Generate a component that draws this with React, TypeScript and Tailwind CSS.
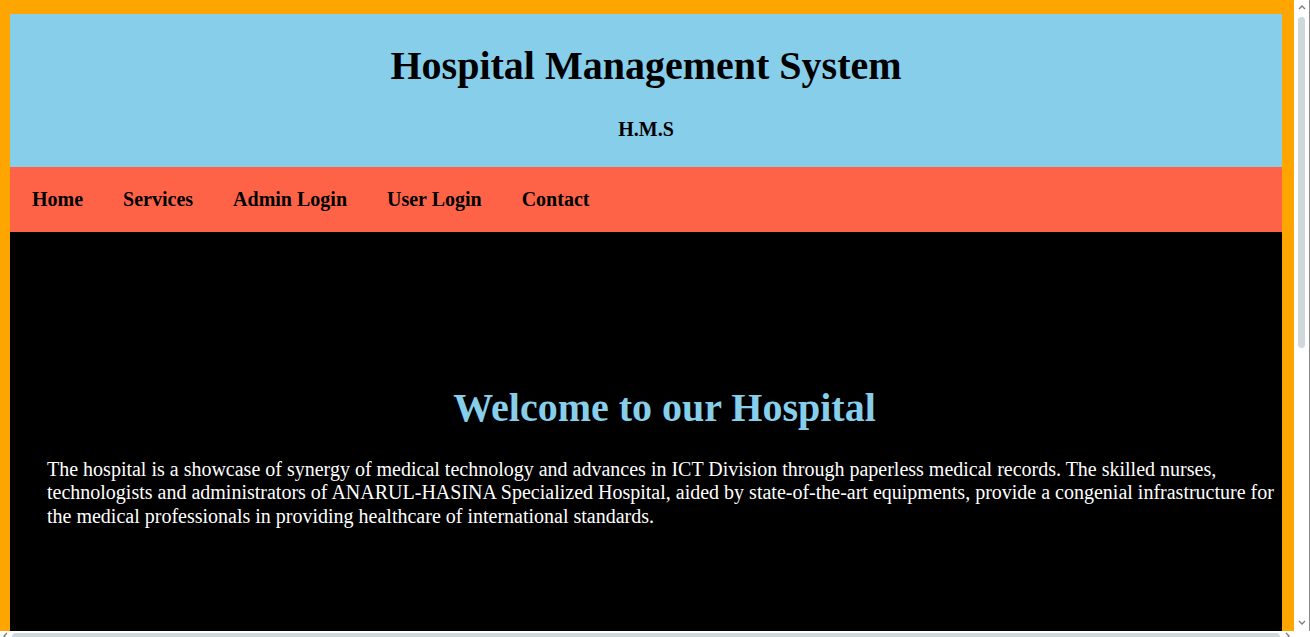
const links = ["Home", "Services", "Admin Login", "User Login", "Contact"];

function Chevron({ dir }: { dir: "up" | "down" | "left" | "right" }) {
  const pts = {
    up: "1,5 4,2 7,5",
    down: "1,2 4,5 7,2",
    left: "5,1 2,4 5,7",
    right: "2,1 5,4 2,7",
  }[dir];
  return (
    <svg width="8" height="8" viewBox="0 0 8 8" className="shrink-0">
      <polyline points={pts} fill="none" stroke="#7a7a7a" strokeWidth="1.3" />
    </svg>
  );
}

export default function App() {
  return (
    <div className="flex h-[637px] flex-col overflow-hidden bg-white font-['Liberation_Serif',serif]">
      <div className="flex h-[631px]">
        {/* page */}
        <div className="w-[1294px] shrink-0 overflow-hidden">
          <div className="border-t-[14px] border-l-[10px] border-r-[12px] border-b-[13px] border-[#ffa500]">
            {/* header */}
            <header className="bg-[#87ceeb] pt-[29px] pb-[26px] text-center text-black">
              <h1 className="text-[40px] leading-[46px] font-bold">Hospital Management System</h1>
              <h3 className="mt-[29px] text-[20px] leading-[23px] font-bold">H.M.S</h3>
            </header>

            {/* nav */}
            <nav className="flex h-[65px] items-center gap-10 bg-[#ff6347] pl-[22px]">
              {links.map((l) => (
                <a key={l} href="#" className="text-[20px] leading-[23px] font-bold text-black">
                  {l}
                </a>
              ))}
            </nav>

            {/* main */}
            <section className="h-[865px] bg-black pt-[153px] pl-[37px]">
              <h2 className="text-center text-[40px] leading-[46px] font-bold text-[#87ceeb]">
                Welcome to our Hospital
              </h2>
              <p className="mt-[27px] text-[20px] leading-[23.4px] text-white">
                The hospital is a showcase of synergy of medical technology and advances in ICT Division through paperless medical records. The skilled nurses, technologists and administrators of ANARUL-HASINA Specialized Hospital, aided by state-of-the-art equipments, provide a congenial infrastructure for the medical professionals in providing healthcare of international standards.
              </p>
            </section>
          </div>
        </div>

        {/* vertical scrollbar */}
        <div className="flex w-[16px] flex-col items-center border-r border-[#8a8a8a] bg-white">
          <div className="flex h-[16px] items-center justify-center">
            <Chevron dir="up" />
          </div>
          <div className="mt-[1px] h-[331px] w-[7px] rounded-full bg-[#cfd8dc]" />
          <div className="flex-1" />
          <div className="flex h-[16px] items-center justify-center">
            <Chevron dir="down" />
          </div>
        </div>
      </div>

      {/* horizontal scrollbar */}
      <div className="flex h-[6px] items-end bg-white pr-[16px]">
        <div className="flex h-[5px] w-[12px] items-start justify-center overflow-hidden">
          <Chevron dir="left" />
        </div>
        <div className="h-[4px] w-[1268px] rounded-t-full bg-[#cfd8dc]" />
        <div className="ml-auto flex h-[5px] w-[12px] items-start justify-center overflow-hidden">
          <Chevron dir="right" />
        </div>
      </div>
    </div>
  );
}
